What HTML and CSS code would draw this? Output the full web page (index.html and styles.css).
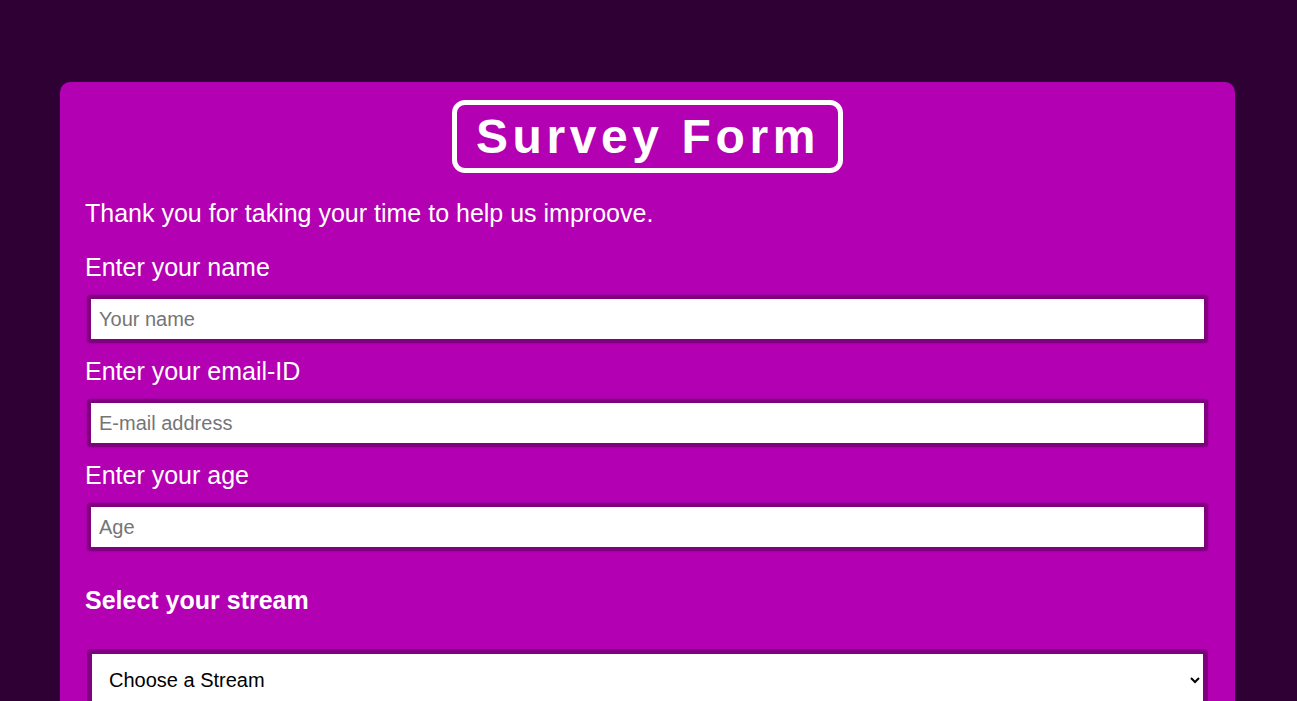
FILE: index.html
```html
<!DOCTYPE html>
<html lang="en">
<head>
<meta charset="utf-8">
<title>Survey Form</title>
<link rel="stylesheet" href="styles.css">
</head>
<body>
<main class="card">
  <div class="title-wrap"><h1 class="title">Survey Form</h1></div>
  <p class="intro">Thank you for taking your time to help us improove.</p>
  <form class="form">
    <label class="label" for="name">Enter your name</label>
    <input class="field" id="name" type="text" placeholder="Your name">
    <label class="label" for="email">Enter your email-ID</label>
    <input class="field" id="email" type="email" placeholder="E-mail address">
    <label class="label" for="age">Enter your age</label>
    <input class="field" id="age" type="number" placeholder="Age">
    <h3 class="section">Select your stream</h3>
    <select class="select">
      <option>Choose a Stream</option>
      <option>Science</option>
      <option>Commerce</option>
      <option>Arts</option>
    </select>
  </form>
</main>
</body>
</html>
```

FILE: styles.css
```css
html, body {
  margin: 0;
  padding: 0;
  background: #2f0033;
  font-family: "Liberation Sans", Arial, sans-serif;
}
body {
  padding: 82px 62px 40px 60px;
}
.card {
  background: #b300b3;
  border-radius: 10px;
  padding: 18px 25px 30px 25px;
  color: #ffffff;
}
.title-wrap {
  display: flex;
  justify-content: center;
}
.title {
  margin: 0;
  border: 5px solid #ffffff;
  border-radius: 13px;
  padding: 4px 18px 4px 19px;
  font-size: 48px;
  line-height: 55px;
  font-weight: bold;
  letter-spacing: 4.6px;
}
.intro {
  margin: 26px 0 0 0;
  font-size: 25px;
  line-height: 28px;
}
.form {
  display: flex;
  flex-direction: column;
  margin-top: 26px;
}
.label {
  font-size: 25px;
  line-height: 28px;
  margin-bottom: 14px;
}
.field {
  margin: 0 2px 14px 2px;
  height: 48px;
  box-sizing: border-box;
  border: 4px solid #800080;
  border-radius: 4px;
  padding: 0 8px;
  font-family: "Liberation Sans", Arial, sans-serif;
  font-size: 20px;
  background: #ffffff;
  box-shadow: 0 0 2px #7a007a;
}
.field::placeholder {
  color: #757575;
}
.section {
  margin: 21px 0 35px 0;
  font-size: 25px;
  line-height: 28px;
  font-weight: bold;
}
.select {
  margin: 0 2px;
  height: 62px;
  box-sizing: border-box;
  border: 5px solid #800080;
  border-radius: 4px;
  padding: 0 13px;
  font-family: "Liberation Sans", Arial, sans-serif;
  font-size: 20px;
  color: #000000;
  background: #ffffff;
}
```
